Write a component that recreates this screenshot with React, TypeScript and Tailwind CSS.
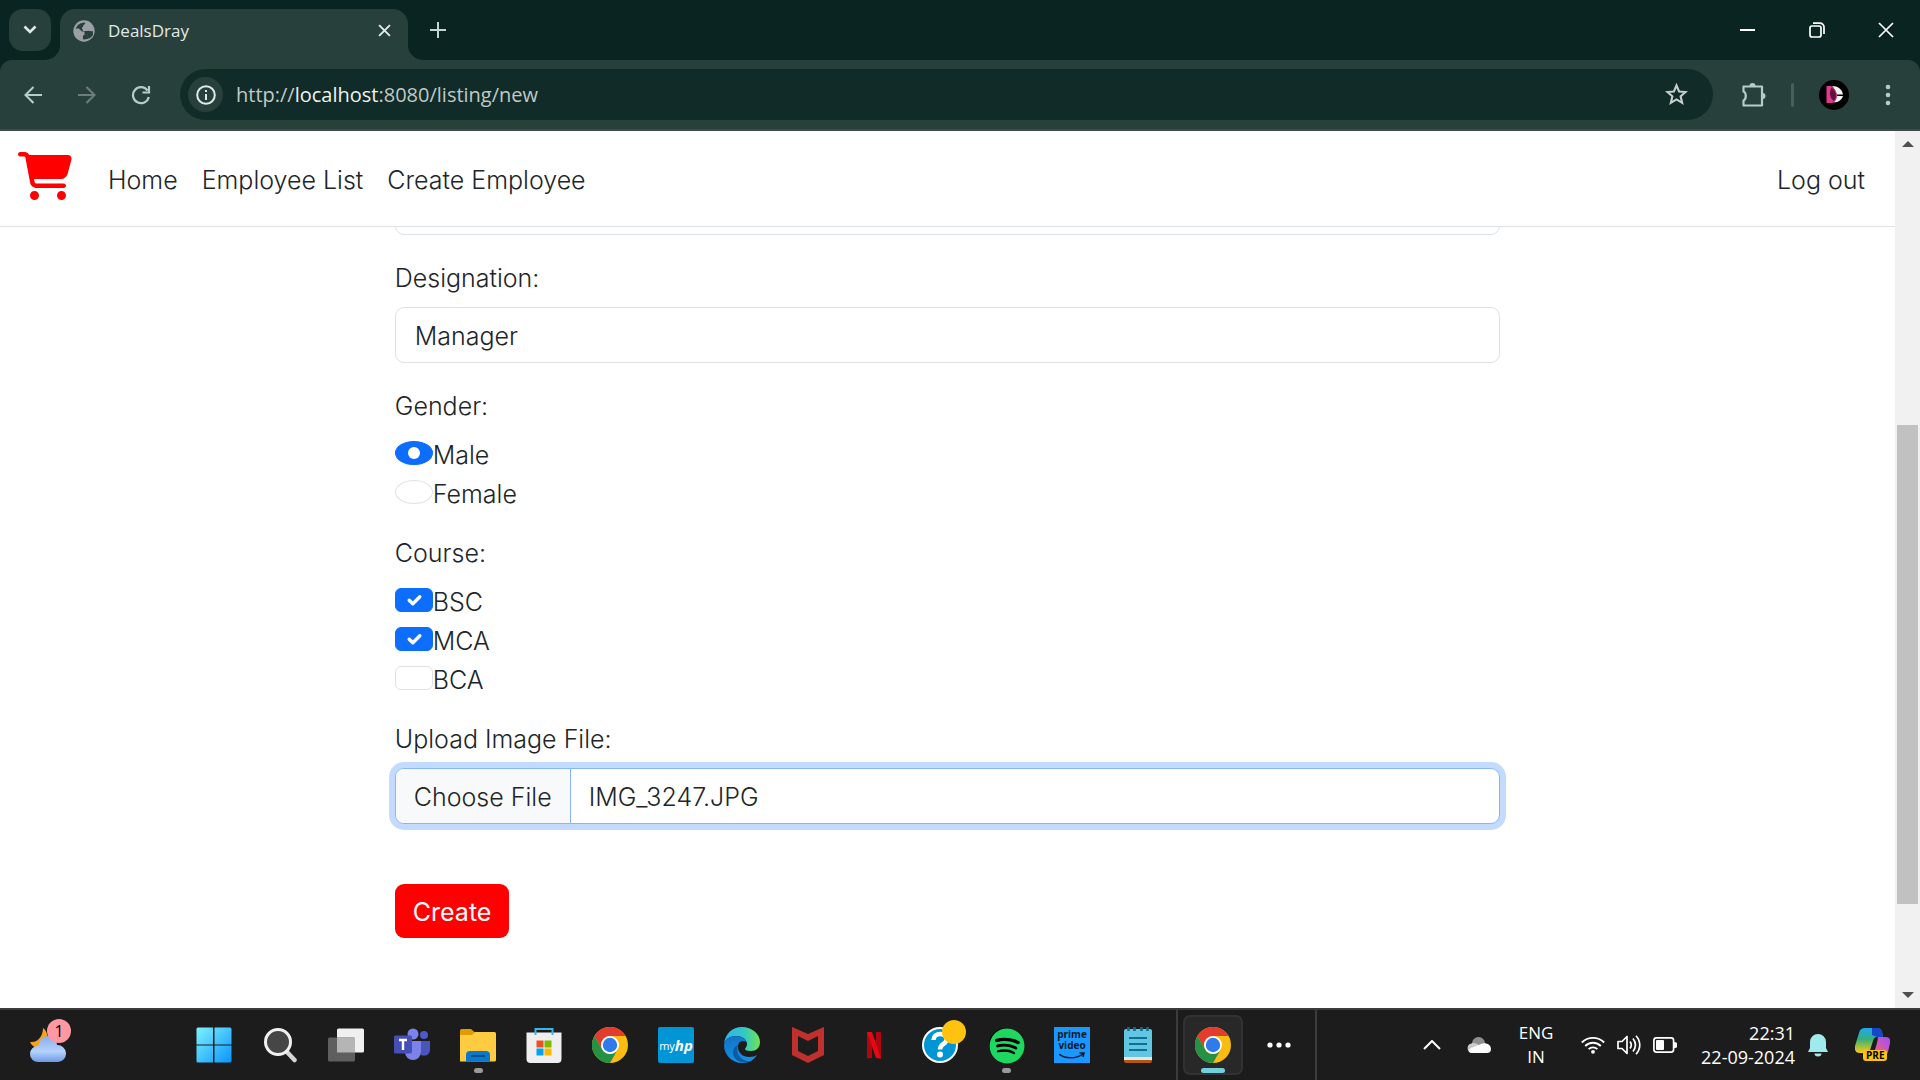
import { useEffect, useRef } from "react";
import type { ReactNode } from "react";
import { FaCartShopping } from "react-icons/fa6";
import { FaSpotify } from "react-icons/fa";

const ui = "font-['Open_Sans','Noto_Sans',sans-serif]";

function TitleBar() {
  return (
    <header className="flex h-[60px] items-end bg-[#0a2421] pl-[9px]">
      <button aria-label="Search tabs" className="mb-[9px] grid size-[42px] place-items-center rounded-[14px] bg-[#28403c]">
        <svg viewBox="0 0 14 10" className="w-[14px]" fill="none" stroke="#dfe9e6" strokeWidth="2.6">
          <path d="M1.5 1.5 7 7l5.5-5.5" />
        </svg>
      </button>
      <div className="relative ml-[9px] flex h-[51px] w-[348px] items-center rounded-t-[15px] bg-[#28403c] pb-[8px] pl-[13px] pr-[16px]">
        <svg viewBox="0 0 15 15" className="absolute bottom-0 -left-[15px] size-[15px]">
          <path d="M15 0v15H0A15 15 0 0 0 15 0Z" fill="#28403c" />
        </svg>
        <svg viewBox="0 0 15 15" className="absolute bottom-0 -right-[15px] size-[15px]">
          <path d="M0 0v15h15A15 15 0 0 1 0 0Z" fill="#28403c" />
        </svg>
        <svg viewBox="1.5 1.5 21 21" className="size-[22px]" fill="#9aa0a6">
          <circle cx="12" cy="12" r="9.200" fill="none" stroke="#9aa0a6" strokeWidth="2" />
          <path d="M11 20.500c-4.500-.5-8-4-8-8.500 0-1 .1-1.700.3-2.500H7l3 3h2.500v3.500H11Z" />
          <path d="M17.900 17.400c-.3-.8-1-1.400-1.900-1.400h-1v-3c0-.6-.4-1-1-1h-3l-1-3 1-1 .5-1.500L13 5l.5-2C18 3.500 21 7.500 21 12c0 2-1.500 4.500-3.100 5.400Z" />
          <path d="M14 12.500c2-2 4 .5 6.500-.5v4l-3 3h-2v-3.500H14Z" fill="#28403c" />
        </svg>
        <span className={`ml-[13px] text-[17px] leading-6 text-[#e1e9e7] ${ui}`}>DealsDray</span>
        <button aria-label="Close tab" className="ml-auto grid size-[16px] place-items-center">
          <svg viewBox="0 0 12 12" className="size-[13px]" fill="none" stroke="#e1e9e7" strokeWidth="1.8">
            <path d="m1 1 10 10M11 1 1 11" />
          </svg>
        </button>
      </div>
      <button aria-label="New tab" className="mb-[21px] ml-[21px] grid size-[18px] place-items-center">
        <svg viewBox="0 0 16 16" className="size-[16px]" fill="none" stroke="#c3d5d0" strokeWidth="2">
          <path d="M8 0v16M0 8h16" />
        </svg>
      </button>
      <div className="ml-auto flex h-full text-white">
        <button aria-label="Minimize" className="grid w-[69px] place-items-center">
          <svg viewBox="0 0 16 16" className="size-[16px]" stroke="currentColor" strokeWidth="2"><path d="M0 8h15" /></svg>
        </button>
        <button aria-label="Restore" className="grid w-[69px] place-items-center">
          <svg viewBox="0 0 16 16" className="size-[16px]" fill="none" stroke="currentColor" strokeWidth="1.700">
            <rect x="1" y="4" width="11" height="11" rx="2" />
            <path d="M4 1.200h7a4 4 0 0 1 4 4V12" />
          </svg>
        </button>
        <button aria-label="Close" className="grid w-[69px] place-items-center">
          <svg viewBox="0 0 16 16" className="size-[16px]" fill="none" stroke="currentColor" strokeWidth="1.700"><path d="m1 1 14 14M15 1 1 15" /></svg>
        </button>
      </div>
    </header>
  );
}

function Toolbar() {
  return (
    <div className="bg-[#0a2421]">
      <div className="flex h-[71px] items-center rounded-t-[12px] border-b-2 border-[#3f4b49] bg-[#28403c] pl-[24px] pr-[29px]">
        <button aria-label="Back">
          <svg viewBox="0 0 18 18" className="size-[18px]" fill="none" stroke="#b5cdc7" strokeWidth="2.100"><path d="M18 9H2M9.500 1 1.500 9l8 8" /></svg>
        </button>
        <button aria-label="Forward" className="ml-[36px]">
          <svg viewBox="0 0 18 18" className="size-[18px]" fill="none" stroke="#6a7f7a" strokeWidth="2.100"><path d="M0 9h16M8.500 1l8 8-8 8" /></svg>
        </button>
        <button aria-label="Reload" className="ml-[35px]">
          <svg viewBox="0 0 20 20" className="size-[20px]" fill="none" stroke="#b5cdc7" strokeWidth="2.200"><path d="M17.800 12A8 8 0 1 1 16.500 5.500M18 1v6.500h-6.500" /></svg>
        </button>
        <div className="ml-[29px] flex h-[51px] flex-1 items-center rounded-full bg-[#112b28] pl-[8px] pr-[25px]">
          <button aria-label="Site information" className="grid size-[35px] place-items-center rounded-full bg-[#28403c]">
            <svg viewBox="0 0 20 20" className="size-[20px]" fill="none" stroke="#e1e9e7" strokeWidth="2">
              <circle cx="10" cy="10" r="8.800" />
              <path d="M10 9v6M10 5v2" />
            </svg>
          </button>
          <div className={`ml-[13px] text-[20px] leading-7 text-[#c0c9c7] ${ui}`}>
            http://<span className="text-[#eef3f2]">localhost</span>:8080/listing/new
          </div>
          <button aria-label="Bookmark" className="ml-auto">
            <svg viewBox="0 0 24 24" className="size-[23px]" fill="none" stroke="#c7cfcd" strokeWidth="2.200"><path d="m12 2.500 2.700 6.300 6.800.6-5.200 4.500 1.600 6.800L12 17.100l-5.900 3.600 1.600-6.800-5.200-4.500 6.800-.6Z" /></svg>
          </button>
        </div>
        <button aria-label="Extensions" className="ml-[28px]">
          <svg viewBox="0 0 25 25" className="size-[25px]" fill="none" stroke="#b5cdc7" strokeWidth="2.200" strokeLinejoin="round">
            <path d="M2.500 4.500h18.500V23.500H2.500v-5c3-1 3-8 0-9Z" />
            <path d="M8.500 4a3 3 0 0 1 6 0ZM21.500 11a3 3 0 0 1 0 6Z" fill="#b5cdc7" stroke="none" />
          </svg>
        </button>
        <div className="ml-[25px] h-[24px] w-[3px] rounded bg-[#45605b]" />
        <button aria-label="Profile" className="ml-[25px]">
          <svg viewBox="0 0 30 30" className="size-[30px]">
            <circle cx="15" cy="15" r="15" fill="#000" />
            <path d="M13 6c6 0 10 3 11 8.500h-6.500C17 11 15.500 8.500 13 6ZM17.500 16H24c-1 3.500-4 6.500-9.500 6.500 2-2 3-4 3-6.500Z" fill="#f3f3f3" />
            <path d="M7.500 6H12c3.500 2.500 6 6 6 9.500 0 4-2.500 7-5.500 7.500h-5Z" fill="#e2388f" />
            <path d="M12.500 7.500c3 2.500 4.500 5 4.500 8 0 2-.5 4-2 5.500-4-2-5.500-8-2.500-13.500Z" fill="#5d1239" />
          </svg>
        </button>
        <button aria-label="Menu" className="ml-[36px]">
          <svg viewBox="0 0 6 22" className="h-[22px]" fill="#b5cdc7"><circle cx="3" cy="3" r="2.300" /><circle cx="3" cy="11" r="2.300" /><circle cx="3" cy="19" r="2.300" /></svg>
        </button>
      </div>
    </div>
  );
}

function SiteNav() {
  return (
    <nav className="relative z-10 flex h-24 items-center border-b border-[#dee2e6] bg-white pl-[18px] pr-[30px] text-[25px] leading-[40px]">
      <a href="#home" aria-label="DealsDray" className="mb-[6px]">
        <FaCartShopping className="h-[48px] w-[54px] text-[#ff0000]" />
      </a>
      <div className="flex flex-1 gap-6 pt-[3px] pl-9">
        <a href="#home">Home</a>
        <a href="#employees">Employee List</a>
        <a href="#create">Create Employee</a>
        <a href="#logout" className="ml-auto">Log out</a>
      </div>
    </nav>
  );
}

function Choice({ type, name, label, checked }: { type: "radio" | "checkbox"; name: string; label: string; checked?: boolean }) {
  const id = `${name}-${label}`;
  return (
    <div className="flex h-9 items-center">
      <span className="grid place-items-center">
        <input
          id={id}
          type={type}
          name={name}
          defaultChecked={checked}
          className={`peer col-start-1 row-start-1 h-6 w-[38px] appearance-none border border-[#dee2e6] bg-white checked:border-[#0d6efd] checked:bg-[#0d6efd] ${type === "radio" ? "rounded-[50%]" : "rounded-[6px]"}`}
        />
        <svg viewBox="0 0 24 24" className="pointer-events-none invisible col-start-1 row-start-1 size-6 peer-checked:visible">
          {type === "radio" ? (
            <circle cx="12" cy="12" r="6" fill="#fff" />
          ) : (
            <path d="m7.200 12.200 3.600 3.600 7-7" fill="none" stroke="#fff" strokeWidth="3.400" strokeLinecap="round" strokeLinejoin="round" />
          )}
        </svg>
      </span>
      <label htmlFor={id} className="pt-[3px]">{label}</label>
    </div>
  );
}

const field = "h-14 w-full rounded-[9px] border border-[#dee2e6] bg-white px-[19px] pt-[2px] outline-none";

function EmployeeForm() {
  const file = useRef<HTMLInputElement>(null);
  useEffect(() => {
    const data = new DataTransfer();
    data.items.add(new File([""], "IMG_3247.JPG", { type: "image/jpeg" }));
    if (file.current) file.current.files = data.files;
  }, []);
  return (
    <form className="mx-auto flex w-7/12 flex-col gap-6 text-[25px] leading-[38px]" onSubmit={(e) => e.preventDefault()}>
      <input aria-label="Mobile No" className={`-mt-12 ${field}`} />
      <div className="flex flex-col gap-[10px]">
        <label htmlFor="designation">Designation:</label>
        <input id="designation" defaultValue="Manager" className={field} />
      </div>
      <fieldset>
        <legend className="mb-[10px]">Gender:</legend>
        <div className="flex flex-col gap-[3px]">
          <Choice type="radio" name="gender" label="Male" checked />
          <Choice type="radio" name="gender" label="Female" />
        </div>
      </fieldset>
      <fieldset>
        <legend className="mb-[10px]">Course:</legend>
        <div className="flex flex-col gap-[3px]">
          <Choice type="checkbox" name="course" label="BSC" checked />
          <Choice type="checkbox" name="course" label="MCA" checked />
          <Choice type="checkbox" name="course" label="BCA" />
        </div>
      </fieldset>
      <div className="flex flex-col gap-[10px]">
        <label htmlFor="image">Upload Image File:</label>
        <input
          id="image"
          ref={file}
          type="file"
          className="h-14 w-full overflow-hidden rounded-[9px] border border-[#86b7fe] bg-white leading-9 ring-6 ring-[#c2dbfe] file:mr-[18px] file:h-full file:border-0 file:border-r file:border-solid file:border-[#86b7fe] file:bg-[#f8f9fa] file:px-[18px] file:pt-[2px] file:text-[25px] file:font-light"
        />
      </div>
      <button className="mt-9 h-[54px] self-start rounded-[9px] bg-[#ff0000] px-[18px] pt-[2px] font-normal text-white">Create</button>
    </form>
  );
}

function ScrollBar() {
  return (
    <div className="flex w-[25px] flex-col items-center bg-[#f1f1f1] py-[10px]">
      <svg viewBox="0 0 12 6" className="w-[12px]"><path d="M0 6 6 0l6 6Z" fill="#505050" /></svg>
      <div className="flex w-full flex-1 flex-col px-[2px]">
        <div className="flex-[278]" />
        <div className="flex-[479] bg-[#c1c1c1]" />
        <div className="flex-[88]" />
      </div>
      <svg viewBox="0 0 12 6" className="w-[12px]"><path d="M0 0 6 6l6-6Z" fill="#505050" /></svg>
    </div>
  );
}

function Chrome() {
  return (
    <svg viewBox="0 0 36 36" className="size-9">
      <circle cx="18" cy="18" r="18" fill="#fbbc12" />
      <path d="M2.400 9A18 18 0 0 1 33.600 9H18a9 9 0 0 0-7.800 13.500Z" fill="#e33b2e" />
      <path d="M2.400 9 10.200 22.500A9 9 0 0 0 25.800 22.500L18 36A18 18 0 0 1 2.400 9Z" fill="#249145" />
      <circle cx="18" cy="18" r="9" fill="#fff" />
      <circle cx="18" cy="18" r="7.200" fill="#2f7bed" />
    </svg>
  );
}

function TaskButton({ name, running, children }: { name: string; running?: boolean; children: ReactNode }) {
  return (
    <button aria-label={name} className="relative grid h-full w-[66px] place-items-center">
      {children}
      {running && <span className="absolute bottom-[7px] h-[5px] w-[9px] rounded-full bg-[#9a9a9a]" />}
    </button>
  );
}

function TaskBar() {
  return (
    <footer className={`flex h-[72px] items-center border-t-2 border-[#3c3c3c] bg-[#1c1c1c] text-white ${ui}`}>
      <button aria-label="Weather, 1 alert" className="relative ml-[30px] w-[151px]">
        <svg viewBox="0 0 36 36" className="size-9">
          <defs><linearGradient id="wc" x2="0" y2="1"><stop stopColor="#86aef0" /><stop offset=".6" stopColor="#b4d2fa" /><stop offset="1" stopColor="#6d9ae8" /></linearGradient></defs>
          <path d="M13 1c7 5 6 18-4 20-4 0-7-2-9-6 8 1 13-6 13-14Z" fill="#f5a21e" />
          <path d="M9 18a9 9 0 0 1 18 0 8 8 0 0 1 1 17H8a8 8 0 0 1 0-16Z" fill="url(#wc)" />
        </svg>
        <span className="absolute -top-[8px] left-[17px] grid size-6 place-items-center rounded-full bg-[#ff98a3] text-[16px] leading-6 text-black">1</span>
      </button>
      <TaskButton name="Start">
        <svg viewBox="0 0 36 36" className="size-9">
          <defs><linearGradient id="win" x2="1" y2="1"><stop stopColor="#7cf3ff" /><stop offset="1" stopColor="#0a94fc" /></linearGradient></defs>
          <path d="M2 .5h15v17H.5V2Q.5.500 2 .5ZM18.500.5H34Q35.500.500 35.500 2v15.500h-17ZM.5 18.500H17v17H2Q.5 35.500.5 34ZM18.500 18.500h17V34q0 1.500-1.500 1.500H18.500Z" fill="url(#win)" />
        </svg>
      </TaskButton>
      <TaskButton name="Search">
        <svg viewBox="0 0 36 36" className="size-9">
          <path d="m25 25 7.500 8" stroke="#d3d6d9" strokeWidth="4.500" strokeLinecap="round" />
          <circle cx="16" cy="15" r="12.500" fill="#464646" stroke="#f0f1f2" strokeWidth="3" />
        </svg>
      </TaskButton>
      <TaskButton name="Task view">
        <svg viewBox="0 0 36 36" className="size-9">
          <rect x="9" y="1.500" width="27" height="24" rx="1.500" fill="#f0f0f0" />
          <rect y="10.500" width="27" height="24" rx="1.500" fill="#5f5f5f" />
          <path d="M9 10.500h18v15H9Z" fill="#b5b5b5" />
        </svg>
      </TaskButton>
      <TaskButton name="Teams">
        <svg viewBox="0 0 36 36" className="size-9">
          <circle cx="30" cy="8" r="4" fill="#5059c9" />
          <path d="M26 14h10v9a6 6 0 0 1-9 5Z" fill="#4b53bc" />
          <circle cx="19" cy="7" r="5.500" fill="#7b83eb" />
          <path d="M11 14h16v11a8 8 0 0 1-16 0Z" fill="#7b83eb" />
          <rect y="8.500" width="18" height="18" rx="1.500" fill="#464eb8" />
          <path d="M5 13h8M9 13v10" stroke="#fff" strokeWidth="2.400" />
        </svg>
      </TaskButton>
      <TaskButton name="File Explorer" running>
        <svg viewBox="0 0 36 36" className="size-9">
          <path d="M0 3.500Q0 2 1.500 2H11l4 3.500V12H0Z" fill="#e09c00" />
          <path d="M0 8h12l3-3h19.500Q36 5 36 6.500V33q0 1.500-1.500 1.500H0Z" fill="#ffcb40" />
          <path d="M6 34.500V28q0-4 4-4h16q4 0 4 4v6.500Z" fill="#0b78c9" />
          <path d="M11 29h14" stroke="#064f8c" strokeWidth="2" />
        </svg>
      </TaskButton>
      <TaskButton name="Microsoft Store">
        <svg viewBox="0 0 36 36" className="size-9">
          <path d="M.5 5.500h35V32q0 4-4 4h-27q-4 0-4-4Z" fill="#efefef" />
          <path d="M9.500 8V2h17v6" fill="none" stroke="#3cb4ea" strokeWidth="2" />
          <path d="M10.500 13.500h7v7h-7Z" fill="#f04f22" /><path d="M18.500 13.500h7v7h-7Z" fill="#7fb900" />
          <path d="M10.500 21.500h7v7h-7Z" fill="#00a3ee" /><path d="M18.500 21.500h7v7h-7Z" fill="#ffb800" />
        </svg>
      </TaskButton>
      <TaskButton name="Google Chrome"><Chrome /></TaskButton>
      <TaskButton name="myHP">
        <span className="flex size-9 items-center justify-center rounded-[2px] bg-[#0096d6] text-[11px] leading-none">
          my<b className="text-[15px] italic">hp</b>
        </span>
      </TaskButton>
      <TaskButton name="Microsoft Edge">
        <svg viewBox="0 0 36 36" className="size-9">
          <defs>
            <linearGradient id="e1" x2="1"><stop stopColor="#2fb4ee" /><stop offset=".55" stopColor="#31c8c6" /><stop offset="1" stopColor="#6fe552" /></linearGradient>
            <linearGradient id="e2" x2=".3" y2="1"><stop stopColor="#1272c4" /><stop offset="1" stopColor="#1390e4" /></linearGradient>
          </defs>
          <path d="M0 17C1 7 8 0 18 0s18 7 18 15c0 6-4 9-9 9-4 0-6-1-6-2s2-2 2-5c0-4-4-8-11-8S1 13 0 17Z" fill="url(#e1)" />
          <path d="M0 18C1 12 6 9 12 9c6 0 10 3 11 7-2-3-9-3-9 4 0 6 5 10 11 10 4 0 6-1 8-2-3 5-8 8-15 8C8 36 0 28 0 18Z" fill="url(#e2)" />
          <path d="M14 18c-3 8 2 15 11 16.500-8 3-16-2-16-9 0-4 2-6 5-7.500Z" fill="#0c59a4" />
        </svg>
      </TaskButton>
      <TaskButton name="McAfee">
        <svg viewBox="0 0 36 36" className="size-9">
          <path fillRule="evenodd" d="m2 0 16 7 16-7v28l-16 8-16-8Zm6 9v15l10 5 10-5V9l-10 5Z" fill="#c0302d" />
        </svg>
      </TaskButton>
      <TaskButton name="Netflix">
        <svg viewBox="0 0 36 36" className="size-9">
          <path d="M11 5h5v26l-5 .5ZM20 5h5v26.500l-5-.5Z" fill="#b1060f" />
          <path d="M11 5h5l9 26.500-5-.5Z" fill="#e50914" />
        </svg>
      </TaskButton>
      <TaskButton name="Help">
        <svg viewBox="0 0 36 36" className="size-9 overflow-visible">
          <circle cx="18" cy="18" r="17" fill="#0096d6" stroke="#fff" strokeWidth="2" />
          <path d="M11.500 13c0-8 13-8 13-.5 0 5-6.500 4-6.500 10" fill="none" stroke="#fff" strokeWidth="4.500" />
          <circle cx="18" cy="27.500" r="3" fill="#fff" />
          <circle cx="32" cy="5" r="12" fill="#ffc20e" />
        </svg>
      </TaskButton>
      <TaskButton name="Spotify" running>
        <span className="grid size-[34px] place-items-center rounded-full bg-black"><FaSpotify className="size-9 text-[#1ed760]" /></span>
      </TaskButton>
      <TaskButton name="Prime Video">
        <span className="flex size-9 flex-col items-center bg-[#1a98ff] pt-[2px] text-[10px] font-bold leading-[10px] text-[#0b1a2b]">
          <span>prime</span>
          <span className="pt-[1px]">video</span>
          <svg viewBox="0 0 26 8" className="mt-[2px] w-[26px]" fill="none" stroke="currentColor" strokeWidth="1.500"><path d="M0 2c6 5 17 5 24 0M20.500 1H25l-1 4" /></svg>
        </span>
      </TaskButton>
      <TaskButton name="Notepad">
        <svg viewBox="0 0 36 36" className="size-9">
          <path d="M4 30h28v4q0 2-2 2H6q-2 0-2-2Z" fill="#b4560f" />
          <path d="M4 28h28v5H4Z" fill="#e6e6ea" />
          <path d="M4 4q0-2 2-2h24q2 0 2 2v26H4Z" fill="#62c6e2" />
          <path d="M9 11h18M9 17h18M9 23h18" stroke="#0f6f92" strokeWidth="2" />
          <path d="M8.500 0v4M14.500 0v4M21.500 0v4M27.500 0v4" stroke="#0f6f92" strokeWidth="2.600" />
        </svg>
      </TaskButton>
      <div className="ml-[5px] h-full w-[2px] bg-[#3c3c3c]" />
      <button aria-label="DealsDray - Google Chrome" className="relative ml-[5px] grid size-[60px] place-items-center rounded-[7px] border-2 border-[#323232] bg-[#282828]">
        <Chrome />
        <span className="absolute bottom-0 h-[5px] w-6 rounded-full bg-[#73d0da]" />
      </button>
      <button aria-label="More" className="ml-[3px] grid h-full w-[66px] place-items-center">
        <svg viewBox="0 0 24 6" className="w-6" fill="#fff"><circle cx="3" cy="3" r="2.600" /><circle cx="12" cy="3" r="2.600" /><circle cx="21" cy="3" r="2.600" /></svg>
      </button>
      <div className="ml-[3px] h-full w-[2px] bg-[#3c3c3c]" />
      <div className="ml-auto flex items-center pr-[30px] text-[17px] leading-6">
        <svg viewBox="0 0 18 10" className="w-[18px]" fill="none" stroke="#fff" strokeWidth="2"><path d="m1 9 8-8 8 8" /></svg>
        <svg viewBox="0 0 24 16" className="ml-[26px] w-6">
          <path d="M5 7a6.500 6.500 0 0 1 13-1l-4 6H2Z" fill="#8f8f8f" />
          <path d="M5 16A4.800 4.800 0 0 1 4.500 6.500c3-1 6 0 8 2.500L18 6.500l-9 9.500Z" fill="#c9c9c9" />
          <path d="M4 16c-3-1-2-4 0-5l10-4c4-2 10 0 10 5 0 3-2 4-4 4Z" fill="#fafafa" />
        </svg>
        <div className="ml-[27px] w-[36px] text-center">ENG<br />IN</div>
        <svg viewBox="0 0 24 18" className="ml-[27px] w-6" fill="none" stroke="#fff" strokeWidth="1.800">
          <path d="M.8 6.500a16 16 0 0 1 22.400 0M4.200 10a11 11 0 0 1 15.600 0M7.600 13.200a6.200 6.200 0 0 1 8.800 0" />
          <circle cx="12" cy="15.800" r="1.900" fill="#fff" stroke="none" />
        </svg>
        <svg viewBox="0 0 24 20" className="ml-3 w-6" fill="none" stroke="#fff" strokeWidth="1.700">
          <path d="M1 6.500h4l5-5v17l-5-5H1ZM13 6.500c1.500 2 1.500 5 0 7M16 3.500c3 4 3 9 0 13M19 .8c5 5.500 5 13 0 18.400" strokeLinejoin="round" />
        </svg>
        <svg viewBox="0 0 24 16" className="ml-3 w-6">
          <rect x=".9" y=".9" width="19.700" height="14.200" rx="2.500" fill="none" stroke="#fff" strokeWidth="1.700" />
          <rect x="3" y="3" width="8" height="10" rx="1" fill="#fff" /><path d="M21 5q3 0 3 1.500v3Q24 11 21 11Z" fill="#fff" />
        </svg>
        <div className="ml-[24px] text-right text-[18px]">22:31<br />22-09-2024</div>
        <svg viewBox="0 0 20 24" className="ml-[13px] w-5" fill="#9feaec"><path d="M2 15V9a8 8 0 0 1 16 0v6l2 4H0ZM6.500 20.500h7a3.500 3 0 0 1-7 0Z" /></svg>
        <button aria-label="Copilot preview" className="relative ml-[27px] mb-1">
          <svg viewBox="0 0 35 31" className="w-[35px]">
            <defs>
              <linearGradient id="c1" x2="0" y2="1"><stop stopColor="#22a7f0" /><stop offset=".45" stopColor="#35b07c" /><stop offset="1" stopColor="#ffcb0c" /></linearGradient>
              <linearGradient id="c2" x1="1" x2="0" y2="1"><stop stopColor="#a44bf5" /><stop offset="1" stopColor="#ff6a6a" /></linearGradient>
            </defs>
            <path d="M10 0h12q4 0 5 4l1 5h-6q-3 0-4 4l-3 9q-1 3-4 3H5q-6 0-5-7L4 5q1-5 6-5Z" fill="url(#c1)" />
            <path d="M17 0h5q4 0 5 4l1 5h-6L17 7Z" fill="#1447c9" />
            <path d="M23 9h8q5 0 4 6l-2 9q-2 6-8 6H15q3-1 4-5l3-10q1-6 1-6Z" fill="url(#c2)" />
          </svg>
          <span className="absolute left-2 top-[22px] rounded-[3px] bg-[#ffc20e] px-[3px] text-[10px] font-bold leading-[11px] text-black">PRE</span>
        </button>
      </div>
    </footer>
  );
}

export default function App() {
  return (
    <div className="flex min-h-screen flex-col bg-white">
      <TitleBar />
      <Toolbar />
      <div className="flex flex-1">
        <main className="flex-1 overflow-hidden font-['Inter',sans-serif] font-light text-[#212529]">
          <SiteNav />
          <EmployeeForm />
        </main>
        <ScrollBar />
      </div>
      <TaskBar />
    </div>
  );
}
